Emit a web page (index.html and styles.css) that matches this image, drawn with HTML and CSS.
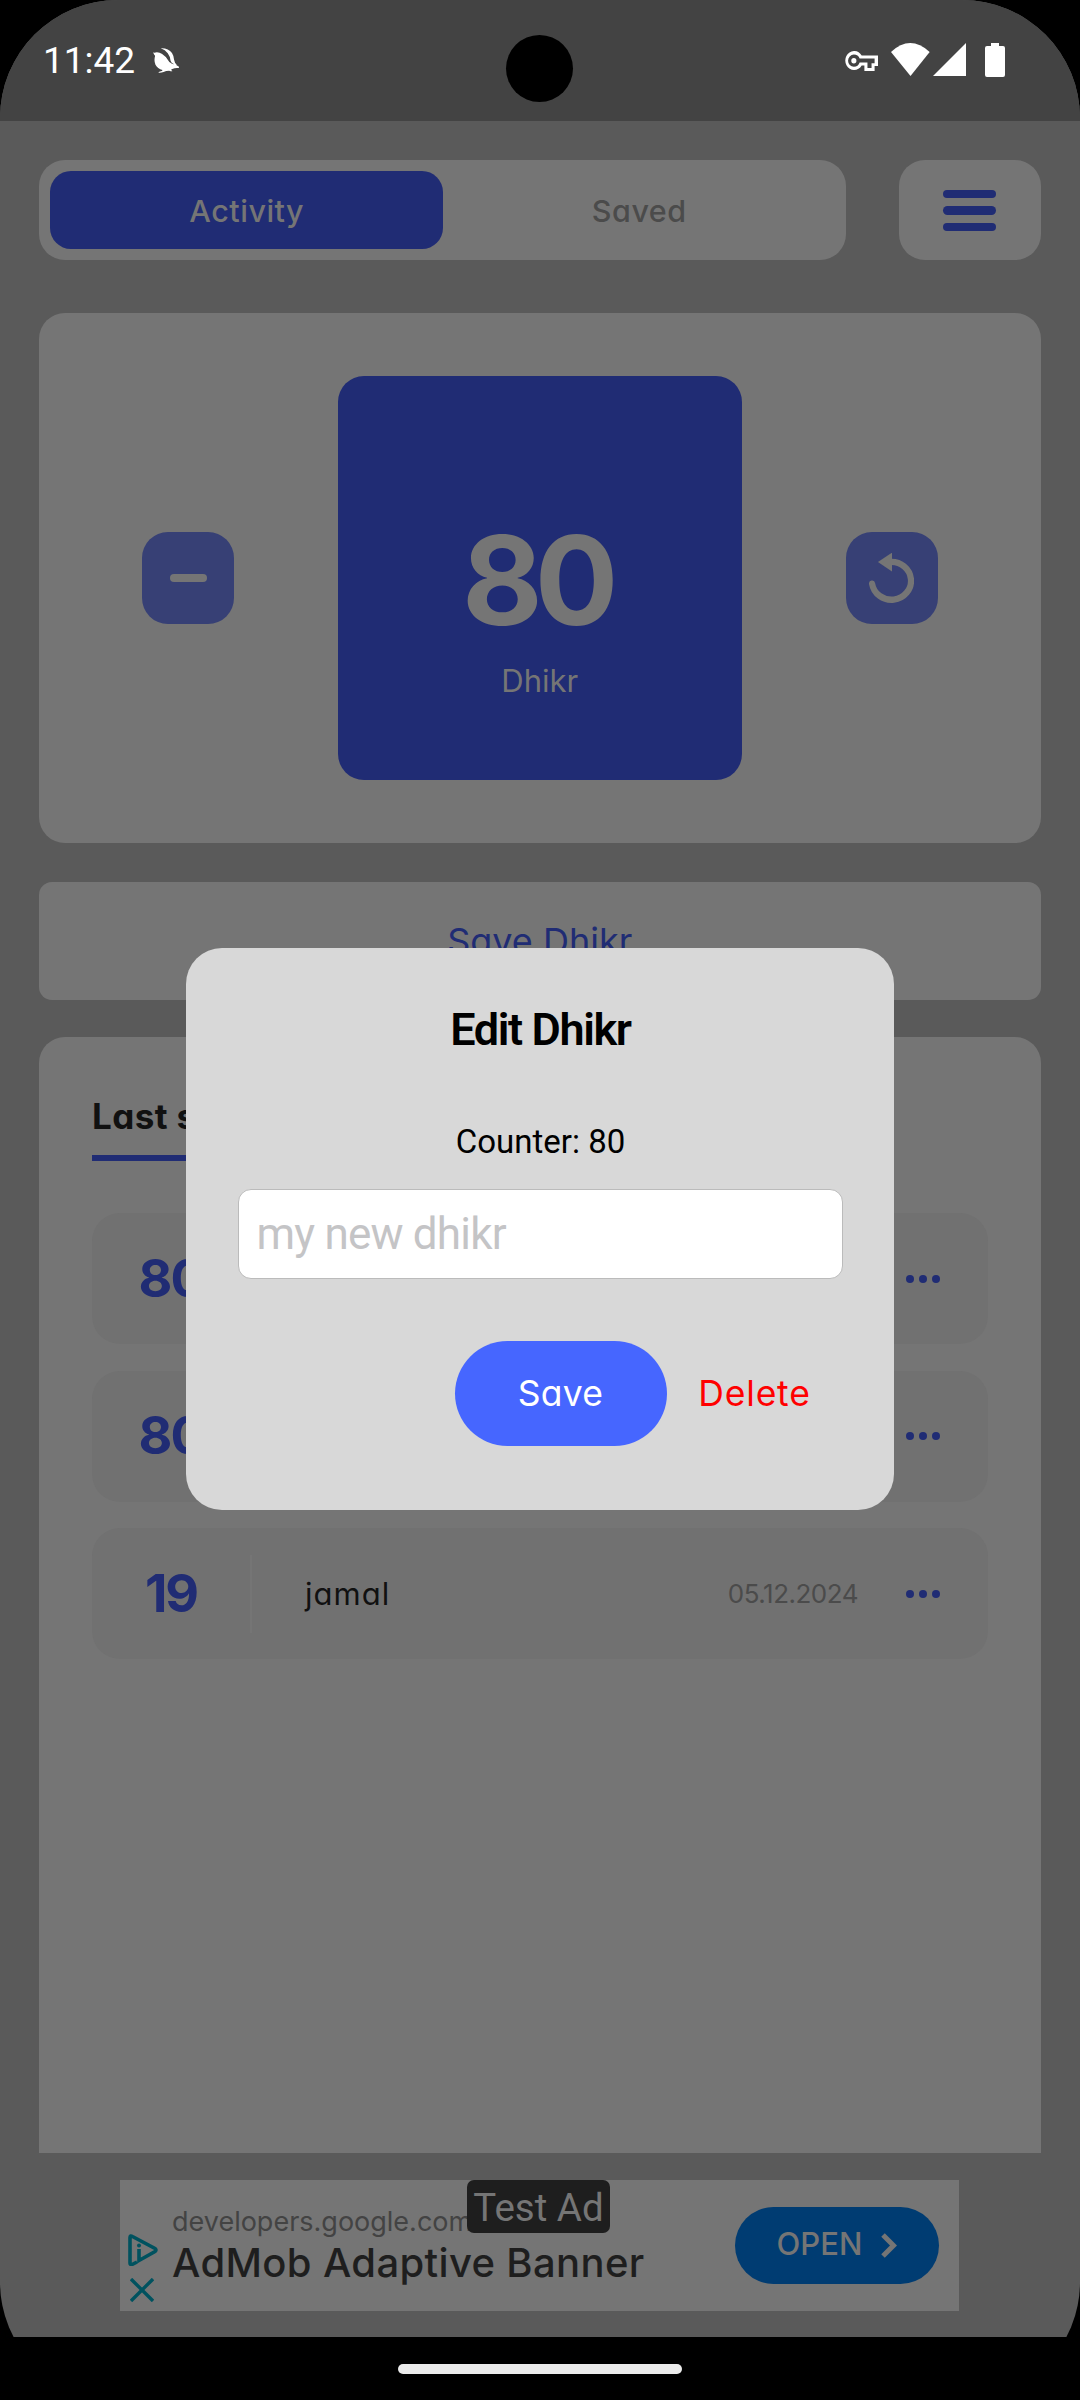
FILE: index.html
```html
<!DOCTYPE html>
<html lang="en">
<head>
<meta charset="utf-8">
<title>Dhikr</title>
<link rel="stylesheet" href="styles.css">
</head>
<body>
<div class="device">
  <div class="screen">
    <header class="status">
      <div class="status-left">
        <span class="clock">11:42</span>
        <svg class="bell" viewBox="38 36 74 75" preserveAspectRatio="none"><path d="M38 52q0-4 4-2q12-3 22 4q10 7 16 17q4 9 12 12q12 2 20 9q3 4-6 4q-7 0-13 3q-3 1-4 3q4 1 4 4q-5 0-9-2q-9 0-16 4q-7 3-15 2q1-3 10-5q2-1 2-3q-14-4-20-16q-5-11-1-27q-4-3-4-7zM60 37q22-1 32 14q5 8 6 20q1 9 8 15q-14-1-18-12q-1-12-8-22q-7-11-20-15z"/></svg>
      </div>
      <div class="camera"></div>
      <div class="status-right">
        <svg class="key" viewBox="885 152 97 61" preserveAspectRatio="none"><path fill-rule="evenodd" d="M911 152a26 29 0 1 0 23 44h8v17h30v-15h10v-32h-48a26 29 0 0 0-23-14zm0 11q13 0 17 12h44v14h-9v15h-12v-17h-23q-4 13-17 13a17 18.500 0 0 1 0-37z"/><ellipse cx="911" cy="182" rx="7.500" ry="8.500"/></svg>
        <svg class="wifi" viewBox="1019 128 114 100" preserveAspectRatio="none"><path d="M1019 155q56-54 113 0L1076 228z"/></svg>
        <svg class="signal" viewBox="0 0 33 33"><path d="M33 0v33H0z"/></svg>
        <svg class="battery" viewBox="0 0 20 34"><path d="M6 0h8v3h4q2 0 2 2v27q0 2-2 2H2q-2 0-2-2V5q0-2 2-2h4z"/></svg>
      </div>
    </header>

    <main class="content">
      <div class="topbar">
        <nav class="tabs">
          <div class="tab tab-active"><span>Activity</span></div>
          <div class="tab"><span>Saved</span></div>
        </nav>
        <button class="menu"><i></i><i></i><i></i></button>
      </div>

      <section class="counter">
        <button class="round"><i class="minus"></i></button>
        <div class="square">
          <span class="value">80</span>
          <span class="label">Dhikr</span>
        </div>
        <button class="round">
          <svg class="reset" viewBox="955 708 131 140" preserveAspectRatio="none"><path d="M1017 733a57 53 0 1 1-53 61" fill="none" stroke="#757575" stroke-width="18" stroke-linecap="round"/><path d="M981 733l41-26v53z" fill="#757575"/></svg>
        </button>
      </section>

      <button class="save-bar"><span>Save Dhikr</span></button>

      <section class="list">
        <h2>Last saved</h2>
        <div class="row"><b>80</b><span class="name"></span><span class="date">05.12.2024</span><span class="dots"><i></i><i></i><i></i></span></div>
        <div class="row"><b>80</b><span class="name"></span><span class="date">05.12.2024</span><span class="dots"><i></i><i></i><i></i></span></div>
        <div class="row"><b>19</b><span class="name">jamal</span><span class="date">05.12.2024</span><span class="dots"><i></i><i></i><i></i></span></div>
      </section>

      <aside class="ad">
        <div class="ad-marks">
          <svg class="choices" viewBox="0 0 30 32"><path d="M9 28L4 30.500Q2 31 2 29V3.500Q2 1 4.500 2.500L27 14.500Q29 16 27 17.500L11 26.500V15" fill="none" stroke="#00525f" stroke-width="3.600"/><circle cx="11" cy="11.500" r="2" fill="#00525f"/></svg>
          <svg class="close" viewBox="0 0 24 24"><path d="M1 1l22 22M23 1L1 23" stroke="#00525f" stroke-width="3.400" fill="none"/></svg>
        </div>
        <div class="ad-text">
          <span class="ad-site">developers.google.com</span>
          <span class="ad-title">AdMob Adaptive Banner</span>
        </div>
        <div class="ad-open"><span>OPEN</span><svg class="chev" viewBox="0 0 16 25"><path d="M2 2l10.500 10.500L2 23" fill="none" stroke="#757575" stroke-width="5"/></svg></div>
        <div class="test-ad">Test Ad</div>
      </aside>
    </main>
  </div>

  <div class="scrim">
    <div class="dialog">
      <h1>Edit Dhikr</h1>
      <p>Counter: 80</p>
      <div class="field"><span>my new dhikr</span></div>
      <div class="actions">
        <button class="save"><span>Save</span></button>
        <button class="delete"><span>Delete</span></button>
      </div>
    </div>
  </div>

  <footer class="navbar"><div class="pill"></div></footer>
</div>
</body>
</html>
```
FILE: styles.css
```css
* { box-sizing: border-box; margin: 0; padding: 0; }
body { background: #000; }
button { border: 0; background: none; font: inherit; }
svg, i { display: block; }

.device {
  position: relative;
  width: 1080px;
  height: 2400px;
  border-radius: 118px;
  overflow: hidden;
  background: #000;
  display: flex;
  flex-direction: column;
  font-family: Inter, "Open Sans", sans-serif;
  font-feature-settings: "cv11";
  line-height: 1;
  white-space: nowrap;
}
.screen { height: 2337px; background: #5a5a5a; display: flex; flex-direction: column; }

.status {
  height: 121px;
  background: #434343;
  display: grid;
  grid-template-columns: 1fr 68px 1fr;
  padding: 0 75px 0 43px;
}
.status svg { fill: #fff; }
.status-left { display: flex; gap: 18px; padding-top: 42px; font-family: Roboto, sans-serif; font-size: 37px; color: #fff; }
.status-left .bell { width: 26px; height: 25px; margin-top: 6px; }
.camera { width: 67px; height: 67px; border-radius: 50%; background: #000; margin-top: 35px; margin-left: 16px; }
.status-right { display: flex; justify-content: flex-end; padding-top: 43px; }
.key { width: 33px; height: 20px; margin: 8px 13px 0 0; }
.wifi { width: 39px; height: 33px; margin-right: 3px; }
.signal { width: 33px; height: 33px; margin-right: 19px; }
.battery { width: 20px; height: 34px; }

.content { flex: 1; padding: 39px 39.500px 26px 39px; display: flex; flex-direction: column; }
.topbar { display: flex; justify-content: space-between; height: 100px; }
.tabs { width: 807px; border-radius: 26px; background: #757575; padding: 11px; display: flex; }
.tab { width: 393px; display: flex; align-items: center; justify-content: center; font-size: 30.500px; font-weight: 450; letter-spacing: .5px; padding: 2px 0 0 1px; color: #4b4b4b; }
.tab-active { background: #202c74; color: #757575; border-radius: 21px; }
.menu { width: 142px; border-radius: 26px; background: #757575; display: flex; flex-direction: column; align-items: center; justify-content: center; gap: 8px; padding-top: 1px; }
.menu i { width: 53px; height: 8.500px; border-radius: 5px; background: #202c74; }

.counter { margin-top: 52.500px; height: 530.500px; border-radius: 26px; background: #757575; display: flex; align-items: center; justify-content: space-between; padding: 0 103px; }
.round { width: 92px; height: 92px; border-radius: 26px; background: #374075; display: flex; align-items: center; justify-content: center; }
.minus { width: 37px; height: 8px; border-radius: 4px; background: #757575; }
.reset { width: 45px; height: 50px; }
.square { width: 404px; height: 404px; border-radius: 26px; background: #202c74; color: #757575; display: flex; flex-direction: column; align-items: center; padding-top: 142px; }
.value { font-size: 124px; font-weight: 700; letter-spacing: -8px; padding-right: 1px; text-indent: -6px; }
.label { font-size: 31px; margin-top: 23px; }

.save-bar { margin-top: 39px; height: 118px; border-radius: 13px; background: #757575; color: #202c74; font-size: 36px; display: flex; align-items: center; justify-content: center; }

.list { margin-top: 37px; height: 1116px; border-radius: 26px 26px 0 0; background: #757575; padding: 62px 52.500px 0 53px; display: flex; flex-direction: column; align-items: flex-start; }
.list h2 { height: 62px; border-bottom: 6px solid #202c74; font-size: 35px; font-weight: 650; letter-spacing: .4px; color: #111; margin-bottom: 52px; }
.row { width: 896px; height: 131px; flex: none; margin-bottom: 26.500px; border-radius: 28px; background: #717171; display: flex; align-items: center; }
.row b { width: 160px; height: 78px; border-right: 2px solid #757575; font-size: 52px; line-height: 78px; letter-spacing: -2px; color: #202c74; text-align: center; }
.name { flex: 1; padding-left: 53px; font-size: 31px; letter-spacing: 1px; color: #111; }
.date { font-size: 26px; letter-spacing: -.5px; color: #4b4b4b; margin: 1px 48px 0 0; }
.dots { display: flex; gap: 5px; padding-right: 48px; }
.dots i { width: 8px; height: 8px; border-radius: 50%; background: #202c74; }

.ad { position: relative; margin: 27px 0 0 80.500px; width: 839px; height: 131px; background: #757575; display: flex; align-items: center; padding: 0 19.500px 0 8.500px; }
.ad-marks { width: 44px; display: flex; flex-direction: column; gap: 12px; padding-top: 45px; }
.choices { width: 30px; height: 32px; }
.close { width: 24px; height: 24px; margin-left: 2px; }
.ad-text { flex: 1; display: flex; flex-direction: column; gap: 8px; padding-bottom: 1px; font-feature-settings: normal; }
.ad-site { font-size: 27px; color: #434343; }
.ad-title { font-size: 40px; font-weight: 500; letter-spacing: .35px; color: #1e1e1e; }
.ad-open { width: 204px; height: 77px; border-radius: 39px; background: #003c72; color: #757575; display: flex; align-items: center; justify-content: center; gap: 19px; font-size: 31px; font-weight: 500; margin-bottom: 1px; }
.ad-open span { margin-bottom: 3px; }
.chev { width: 16px; height: 25px; }
.test-ad { position: absolute; left: 347.500px; top: 0; width: 143px; height: 53px; border-radius: 7px; background: #1e1e1e; color: #757575; font: 38.500px/56px Roboto, sans-serif; text-align: center; }

.scrim { position: absolute; left: 0; top: 121px; width: 1080px; height: 2216px; display: flex; align-items: center; justify-content: center; }
.dialog { width: 708px; height: 562px; border-radius: 36px; background: #d8d8d8; padding: 59px 51.500px 0; font-family: Roboto, sans-serif; color: #000; display: flex; flex-direction: column; }
.dialog h1 { font-size: 45px; font-weight: 600; letter-spacing: -1.400px; text-align: center; padding-left: 1px; }
.dialog p { font-size: 33px; margin-top: 73px; text-align: center; padding-left: 1px; }
.field { margin-top: 31px; height: 90px; border: 1px solid #bbb; border-radius: 13px; background: #fff; padding: 0 18px; display: flex; align-items: center; font-size: 44px; letter-spacing: -.8px; color: #c4c4c6; }
.actions { margin-top: 62px; height: 105px; display: flex; justify-content: flex-end; align-items: stretch; font-family: Inter, sans-serif; font-size: 35.500px; }
.save { width: 212px; border-radius: 53px; background: #4666ff; color: #fff; letter-spacing: .3px; }
.delete { width: 176px; color: #f00; letter-spacing: .8px; }

.navbar { height: 63px; display: flex; justify-content: center; padding-top: 27px; }
.pill { width: 284px; height: 10px; border-radius: 5px; background: #ebebeb; }
```
